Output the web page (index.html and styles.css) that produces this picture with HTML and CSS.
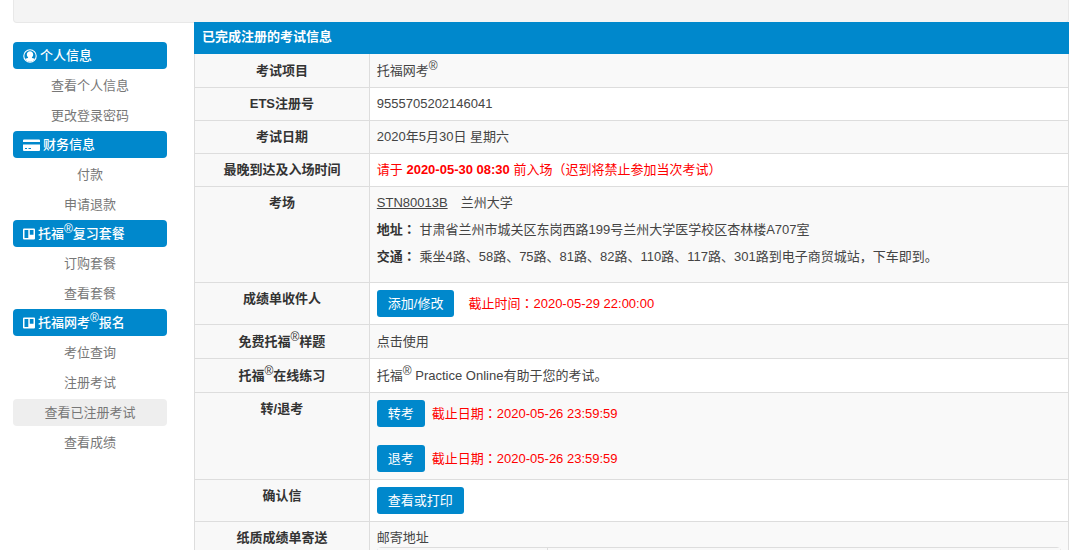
FILE: index.html
```html
<!DOCTYPE html>
<html lang="zh-CN">
<head>
<meta charset="utf-8">
<meta name="viewport" content="width=device-width, initial-scale=1">
<title>查看已注册考试</title>
<link rel="stylesheet" href="styles.css">
</head>
<body>
<div class="page">
  <div class="topbar"></div>
  <div class="columns">
    <nav class="sidebar">
      <section class="group">
        <h2 class="group-title">
          <svg class="icon" width="14" height="14" viewBox="0 0 14 14" aria-hidden="true"><circle cx="7" cy="7" r="6.2" fill="none" stroke="#fff" stroke-width="1.1"/><path d="M7 2.3c1.900 0 3.200 1.300 3.200 3.200 0 1.200-.6 2.300-1.400 2.900.2.700 1.900.7 3.100 1.700A5.700 5.700 0 0 1 7 12.700a5.700 5.700 0 0 1-4.900-2.600c1.200-1 2.900-1 3.100-1.700-.8-.6-1.400-1.700-1.400-2.900C3.800 3.600 5.100 2.300 7 2.300z" fill="#fff"/></svg>
          <span>个人信息</span>
        </h2>
        <a class="item" href="#">查看个人信息</a>
        <a class="item" href="#">更改登录密码</a>
      </section>
      <section class="group">
        <h2 class="group-title">
          <svg class="icon" width="17" height="12" viewBox="0 0 17 12" aria-hidden="true"><path d="M1 .5h15a1 1 0 0 1 1 1V3H0V1.500a1 1 0 0 1 1-1zM0 5.500h17V11a1 1 0 0 1-1 1H1a1 1 0 0 1-1-1z" fill="#fff"/><path d="M2 9.500h2M5.500 9.500h2.500" stroke="#08c" stroke-width="1"/></svg>
          <span>财务信息</span>
        </h2>
        <a class="item" href="#">付款</a>
        <a class="item" href="#">申请退款</a>
      </section>
      <section class="group">
        <h2 class="group-title">
          <svg class="icon" width="12" height="12" viewBox="0 0 12 12" aria-hidden="true"><path fill="#fff" fill-rule="evenodd" d="M1 .5h10a1 1 0 0 1 1 1v9a1 1 0 0 1-1 1H1a1 1 0 0 1-1-1v-9a1 1 0 0 1 1-1zM1.500 2v8h3.800V2zM6.800 2v4.800h3.700V2z"/></svg>
          <span>托福<sup>®</sup>复习套餐</span>
        </h2>
        <a class="item" href="#">订购套餐</a>
        <a class="item" href="#">查看套餐</a>
      </section>
      <section class="group">
        <h2 class="group-title">
          <svg class="icon" width="12" height="12" viewBox="0 0 12 12" aria-hidden="true"><path fill="#fff" fill-rule="evenodd" d="M1 .5h10a1 1 0 0 1 1 1v9a1 1 0 0 1-1 1H1a1 1 0 0 1-1-1v-9a1 1 0 0 1 1-1zM1.500 2v8h3.800V2zM6.800 2v4.800h3.700V2z"/></svg>
          <span>托福网考<sup>®</sup>报名</span>
        </h2>
        <a class="item" href="#">考位查询</a>
        <a class="item" href="#">注册考试</a>
        <a class="item current" href="#" aria-current="page">查看已注册考试</a>
        <a class="item" href="#">查看成绩</a>
      </section>
    </nav>
    <main class="content">
      <table class="info">
        <colgroup><col class="label-col"><col></colgroup>
        <thead>
          <tr><th class="caption" colspan="2">已完成注册的考试信息</th></tr>
        </thead>
        <tbody>
          <tr class="marked"><th scope="row">考试项目</th><td>托福网考<sup>®</sup></td></tr>
          <tr><th scope="row">ETS注册号</th><td>9555705202146041</td></tr>
          <tr><th scope="row">考试日期</th><td>2020年5月30日 星期六</td></tr>
          <tr><th scope="row">最晚到达及入场时间</th><td class="alert">请于 <b>2020-05-30 08:30</b> 前入场（迟到将禁止参加当次考试）</td></tr>
          <tr>
            <th scope="row">考场</th>
            <td>
              <p class="line"><a class="site" href="#">STN80013B</a>兰州大学</p>
              <p class="line"><b>地址<span class="colon" lang="ja">：</span></b> 甘肃省兰州市城关区东岗西路199号兰州大学医学校区杏林楼A707室</p>
              <p class="line"><b>交通<span class="colon" lang="ja">：</span></b> 乘坐4路、58路、75路、81路、82路、110路、117路、301路到电子商贸城站，下车即到。</p>
            </td>
          </tr>
          <tr>
            <th scope="row">成绩单收件人</th>
            <td><div class="action wide"><button class="btn" type="button">添加/修改</button><span class="alert">截止时间<span class="colon" lang="ja">：</span>2020-05-29 22:00:00</span></div></td>
          </tr>
          <tr class="marked"><th scope="row">免费托福<sup>®</sup>样题</th><td>点击使用</td></tr>
          <tr class="marked"><th scope="row">托福<sup>®</sup>在线练习</th><td>托福<sup>®</sup> Practice Online有助于您的考试。</td></tr>
          <tr>
            <th scope="row">转/退考</th>
            <td>
              <div class="actions">
                <div class="action"><button class="btn" type="button">转考</button><span class="alert">截止日期<span class="colon" lang="ja">：</span>2020-05-26 23:59:59</span></div>
                <div class="action"><button class="btn" type="button">退考</button><span class="alert">截止日期<span class="colon" lang="ja">：</span>2020-05-26 23:59:59</span></div>
              </div>
            </td>
          </tr>
          <tr>
            <th scope="row">确认信</th>
            <td><div class="action"><button class="btn" type="button">查看或打印</button></div></td>
          </tr>
          <tr>
            <th scope="row">纸质成绩单寄送</th>
            <td>
              邮寄地址
              <table class="address"><tbody><tr><td></td><td></td></tr></tbody></table>
            </td>
          </tr>
        </tbody>
      </table>
    </main>
  </div>
</div>
</body>
</html>
```
FILE: styles.css
```css
* {
  box-sizing: border-box;
}

body {
  margin: 0;
  height: 100vh;
  overflow: hidden;
  background: #fff;
  color: #444;
  font: 13px/18px "Liberation Sans", "Noto Sans CJK SC", sans-serif;
}

.page {
  padding: 0 11px 0 13px;
}

.topbar {
  height: 23px;
  margin-bottom: -1px;
  background: #f4f4f4;
  border: 1px solid #e8e8e8;
  border-top: 0;
  border-radius: 0 0 4px 4px;
}

.columns {
  display: flex;
  align-items: flex-start;
  gap: 27px;
}

.sidebar {
  flex: none;
  width: 154px;
  padding-top: 20px;
}

.group {
  display: flex;
  flex-direction: column;
}

.group-title {
  display: flex;
  align-items: center;
  gap: 3px;
  height: 27px;
  margin: 0 0 3px;
  padding: 0 10px;
  border-radius: 4px;
  background: #08c;
  color: #fff;
  font-size: 13px;
  font-weight: 500;
}

.icon {
  flex: none;
}

.item {
  height: 27px;
  margin-bottom: 3px;
  border-radius: 4px;
  color: #777;
  line-height: 27px;
  text-align: center;
  text-decoration: none;
}

.item:last-child {
  margin-bottom: 2px;
}

.item.current {
  background: #eee;
}

sup {
  font-size: 12px;
  font-weight: 400;
  line-height: 0;
  vertical-align: 5px;
}

.colon {
  font-family: "Noto Sans CJK JP", sans-serif;
  line-height: 0;
}

.content {
  flex: 1;
  min-width: 0;
}

.info {
  width: 100%;
  table-layout: fixed;
  border-collapse: collapse;
}

.label-col {
  width: 20%;
}

.info th,
.info td {
  padding: 7px;
  border: 1px solid #ddd;
  vertical-align: top;
}

.info .marked > * {
  line-height: 19px;
}

.info th {
  background: #f8f8f8;
  color: #333;
  text-align: center;
}

.info .caption {
  padding: 5px 7px 7px;
  border-color: #08c;
  background: #08c;
  color: #fff;
  text-align: left;
}

.info tr:nth-child(odd) > td {
  background: #f9f9f9;
}

.info .alert {
  color: #f00;
}

.line {
  margin: 0 0 9px;
}

.line b {
  color: #333;
}

.site {
  margin-right: 13px;
  color: #444;
}

.actions {
  display: flex;
  flex-direction: column;
  gap: 18px;
}

.action {
  display: flex;
  align-items: center;
  gap: 7px;
}

.action.wide {
  gap: 14px;
}

.btn {
  height: 27px;
  padding: 0 11px;
  border: 0;
  border-radius: 3px;
  background: #08c;
  color: #fff;
  font: inherit;
}

.address {
  width: 100%;
  table-layout: fixed;
  border-collapse: separate;
  border-spacing: 0;
  border: 1px solid #ddd;
  border-radius: 4px;
}

.info .address td {
  height: 32px;
  border: 0;
}

.info .address td:first-child {
  width: 25%;
  border-right: 1px solid #ddd;
}
```
